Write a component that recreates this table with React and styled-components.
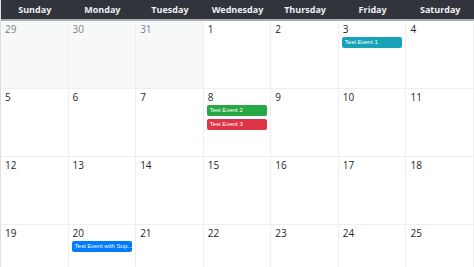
import React from "react";
import styled, { createGlobalStyle } from "styled-components";

const Global = createGlobalStyle`
    html, body {
        margin: 0;
        padding: 0;
        background: #fff;
        overflow: hidden;
    }
    body {
        font-family: "Open Sans", "Noto Sans", sans-serif;
    }
`;

const Calendar = styled.div`
    width: 474px;
    height: 267px;
    overflow: hidden;
    border-left: 1px solid #dcdfe3;
    box-sizing: border-box;
`;

const Header = styled.div`
    display: grid;
    grid-template-columns: repeat(7, 1fr);
    height: 19px;
    background-color: #31353b;
    border-bottom: 2px solid #a9adb2;
`;

const DayName = styled.div`
    display: flex;
    align-items: center;
    justify-content: center;
    color: #eef0f2;
    font-size: 9px;
    font-weight: 700;
`;

const Grid = styled.div`
    display: grid;
    grid-template-columns: repeat(7, 1fr);
    grid-auto-rows: 68px;
`;

const Cell = styled.div`
    box-sizing: border-box;
    padding: 2px 3px 0 3px;
    border-right: 1px solid #eceef0;
    border-bottom: 1px solid #eceef0;
    background-color: ${p => (p.$muted ? "#f7f8fa" : "#fff")};
    overflow: hidden;
`;

const DayNumber = styled.div`
    font-size: 10px;
    line-height: 13px;
    padding-left: 1px;
    color: ${p => (p.$muted ? "#7b8188" : "#23272b")};
`;

const Event = styled.div`
    margin-top: 1px;
    margin-bottom: 3px;
    height: 11px;
    line-height: 11px;
    padding: 0 3px;
    border-radius: 2px;
    background-color: ${p => p.$color};
    color: #fff;
    font-family: "Liberation Sans", Arial, sans-serif;
    font-size: 6px;
    white-space: nowrap;
    overflow: hidden;
`;

const days = ["Sunday", "Monday", "Tuesday", "Wednesday", "Thursday", "Friday", "Saturday"];

const events = {
    3: [{ title: "Test Event 1", color: "#17a2b8" }],
    8: [
        { title: "Test Event 2", color: "#28a745" },
        { title: "Test Event 3", color: "#dc3545" }
    ],
    20: [{ title: "Test Event with Sup...", color: "#007bff" }]
};

const cells = [
    { n: 29, muted: true },
    { n: 30, muted: true },
    { n: 31, muted: true }
];
for (let i = 1; i <= 25; i++) cells.push({ n: i, muted: false });

export default function App() {
    return (
        <>
            <Global />
            <Calendar>
                <Header>
                    {days.map(d => (
                        <DayName key={d}>{d}</DayName>
                    ))}
                </Header>
                <Grid>
                    {cells.map(c => (
                        <Cell key={`${c.muted}-${c.n}`} $muted={c.muted}>
                            <DayNumber $muted={c.muted}>{c.n}</DayNumber>
                            {!c.muted &&
                                (events[c.n] || []).map(e => (
                                    <Event key={e.title} $color={e.color}>
                                        {e.title}
                                    </Event>
                                ))}
                        </Cell>
                    ))}
                </Grid>
            </Calendar>
        </>
    );
}
